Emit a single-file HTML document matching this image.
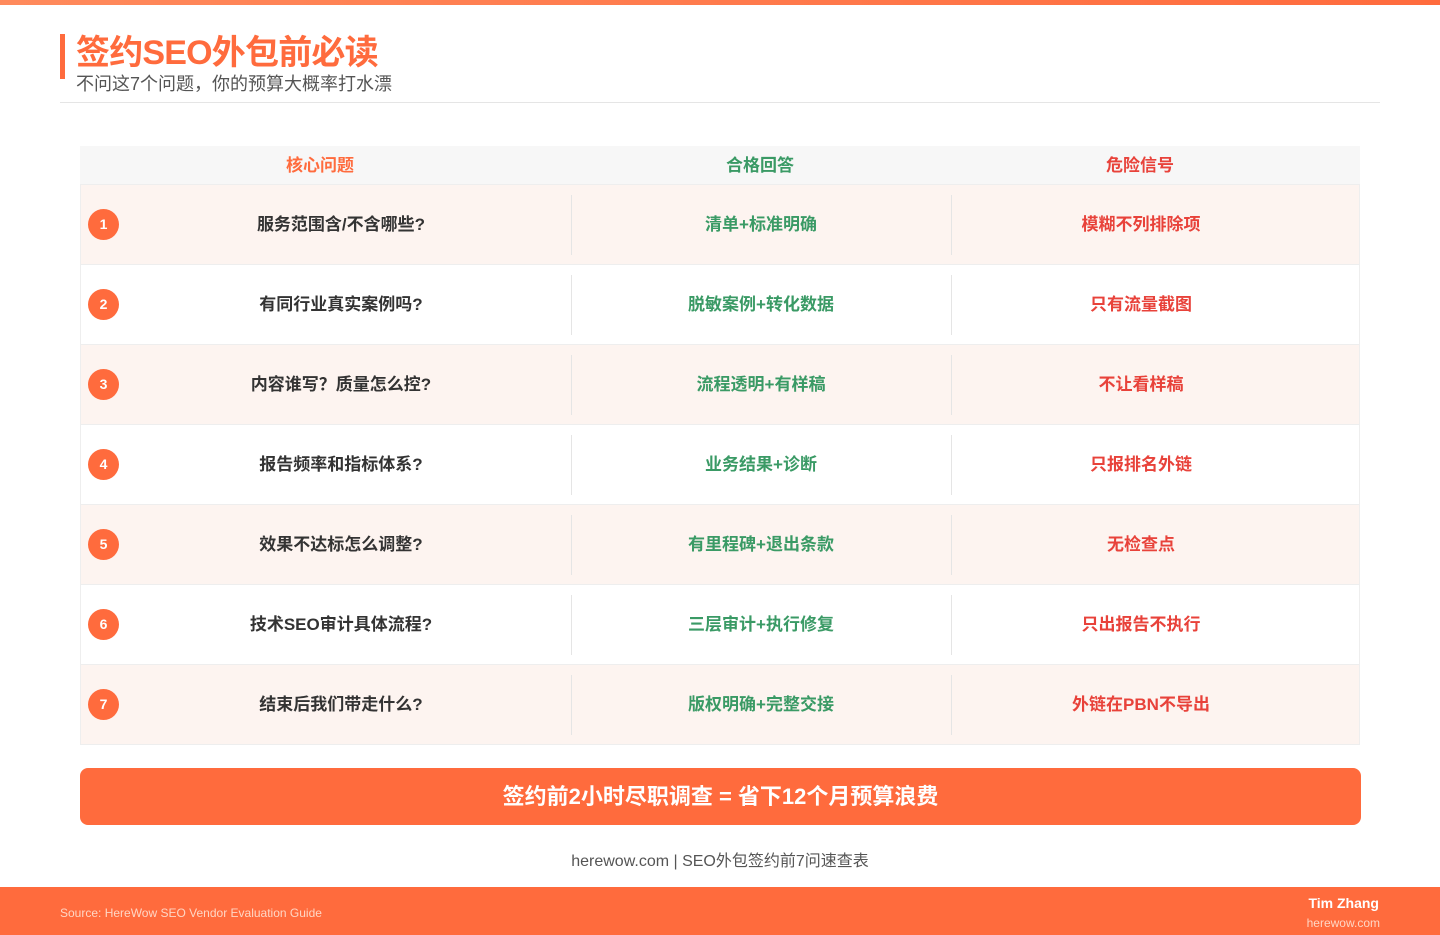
<!DOCTYPE html>
<html><head><meta charset="utf-8"><style>
*{margin:0;padding:0;box-sizing:border-box}
body{width:1440px;height:935px;background:#fff;position:relative;overflow:hidden;font-family:"Liberation Sans","Noto Sans CJK SC",sans-serif}
.top{position:absolute;left:0;top:0;width:1440px;height:5px;background:linear-gradient(90deg,#ff8a5c,#ff6b3d)}
.bar{position:absolute;left:60px;top:34px;width:5px;height:45px;background:#ff6b3d}
h1{position:absolute;left:76px;top:31px;font-size:34px;font-weight:bold;color:#ff6b3d;line-height:44px;letter-spacing:-0.8px}
.sub{position:absolute;left:76px;top:72px;font-size:18px;color:#555;line-height:24px}
.hr{position:absolute;left:60px;top:102px;width:1320px;height:1px;background:#e5e5e5}
.tbl{position:absolute;left:80px;top:146px;width:1280px}
.hd{height:39px;background:#f7f7f7;display:flex;font-weight:bold;font-size:17px;line-height:39px;border-bottom:1px solid #eee}
.row{height:80px;display:flex;position:relative;font-weight:bold;font-size:17px;line-height:80px;border-bottom:1px solid #eee;border-left:1px solid #eee;border-right:1px solid #eee}
.row.o{background:#fdf4f0}
.c1{width:490px;text-align:center;padding-left:30px;color:#333}
.c2{width:380px;text-align:center;color:#3a9a65;position:relative}
.c3{width:380px;text-align:center;color:#e8423a;position:relative}
.row .c2:before,.row .c3:before{content:"";position:absolute;left:0;top:10px;height:60px;width:1px;background:#e5e5e5}
.hd .c1{padding-left:0;color:#ff6b3d;width:480px}
.hd .c2{width:400px}
.hd .c3{width:360px}
.n{position:absolute;left:7px;top:24px;width:31px;height:31px;border-radius:50%;background:#ff6b3d;color:#fff;font-size:14px;line-height:31px;text-align:center}
.cta{position:absolute;left:80px;top:768px;width:1281px;height:57px;background:#ff6b3d;border-radius:8px;color:#fff;font-weight:bold;font-size:22px;line-height:57px;text-align:center}
.src{position:absolute;left:0;top:850px;width:1440px;text-align:center;font-size:16px;color:#555;line-height:24px}
.foot{position:absolute;left:0;top:887px;width:1440px;height:48px;background:#ff6b3d}
.foot .l{position:absolute;left:60px;top:19px;font-size:12px;color:#ffd6c4}
.foot .a{position:absolute;right:61px;top:8px;font-size:14px;font-weight:bold;color:#fff}
.foot .w{position:absolute;right:60px;top:29px;font-size:12px;color:#ffd6c4}
</style></head><body>
<div class="top"></div>
<div class="bar"></div>
<h1>签约SEO外包前必读</h1>
<div class="sub">不问这7个问题，你的预算大概率打水漂</div>
<div class="hr"></div>
<div class="tbl">
<div class="hd"><div class="c1">核心问题</div><div class="c2">合格回答</div><div class="c3">危险信号</div></div>
<div class="row o"><span class="n">1</span><div class="c1">服务范围含/不含哪些?</div><div class="c2">清单+标准明确</div><div class="c3">模糊不列排除项</div></div>
<div class="row"><span class="n">2</span><div class="c1">有同行业真实案例吗?</div><div class="c2">脱敏案例+转化数据</div><div class="c3">只有流量截图</div></div>
<div class="row o"><span class="n">3</span><div class="c1">内容谁写？质量怎么控?</div><div class="c2">流程透明+有样稿</div><div class="c3">不让看样稿</div></div>
<div class="row"><span class="n">4</span><div class="c1">报告频率和指标体系?</div><div class="c2">业务结果+诊断</div><div class="c3">只报排名外链</div></div>
<div class="row o"><span class="n">5</span><div class="c1">效果不达标怎么调整?</div><div class="c2">有里程碑+退出条款</div><div class="c3">无检查点</div></div>
<div class="row"><span class="n">6</span><div class="c1">技术SEO审计具体流程?</div><div class="c2">三层审计+执行修复</div><div class="c3">只出报告不执行</div></div>
<div class="row o"><span class="n">7</span><div class="c1">结束后我们带走什么?</div><div class="c2">版权明确+完整交接</div><div class="c3">外链在PBN不导出</div></div>
</div>
<div class="cta">签约前2小时尽职调查 = 省下12个月预算浪费</div>
<div class="src">herewow.com | SEO外包签约前7问速查表</div>
<div class="foot"><div class="l">Source: HereWow SEO Vendor Evaluation Guide</div><div class="a">Tim Zhang</div><div class="w">herewow.com</div></div>
</body></html>
